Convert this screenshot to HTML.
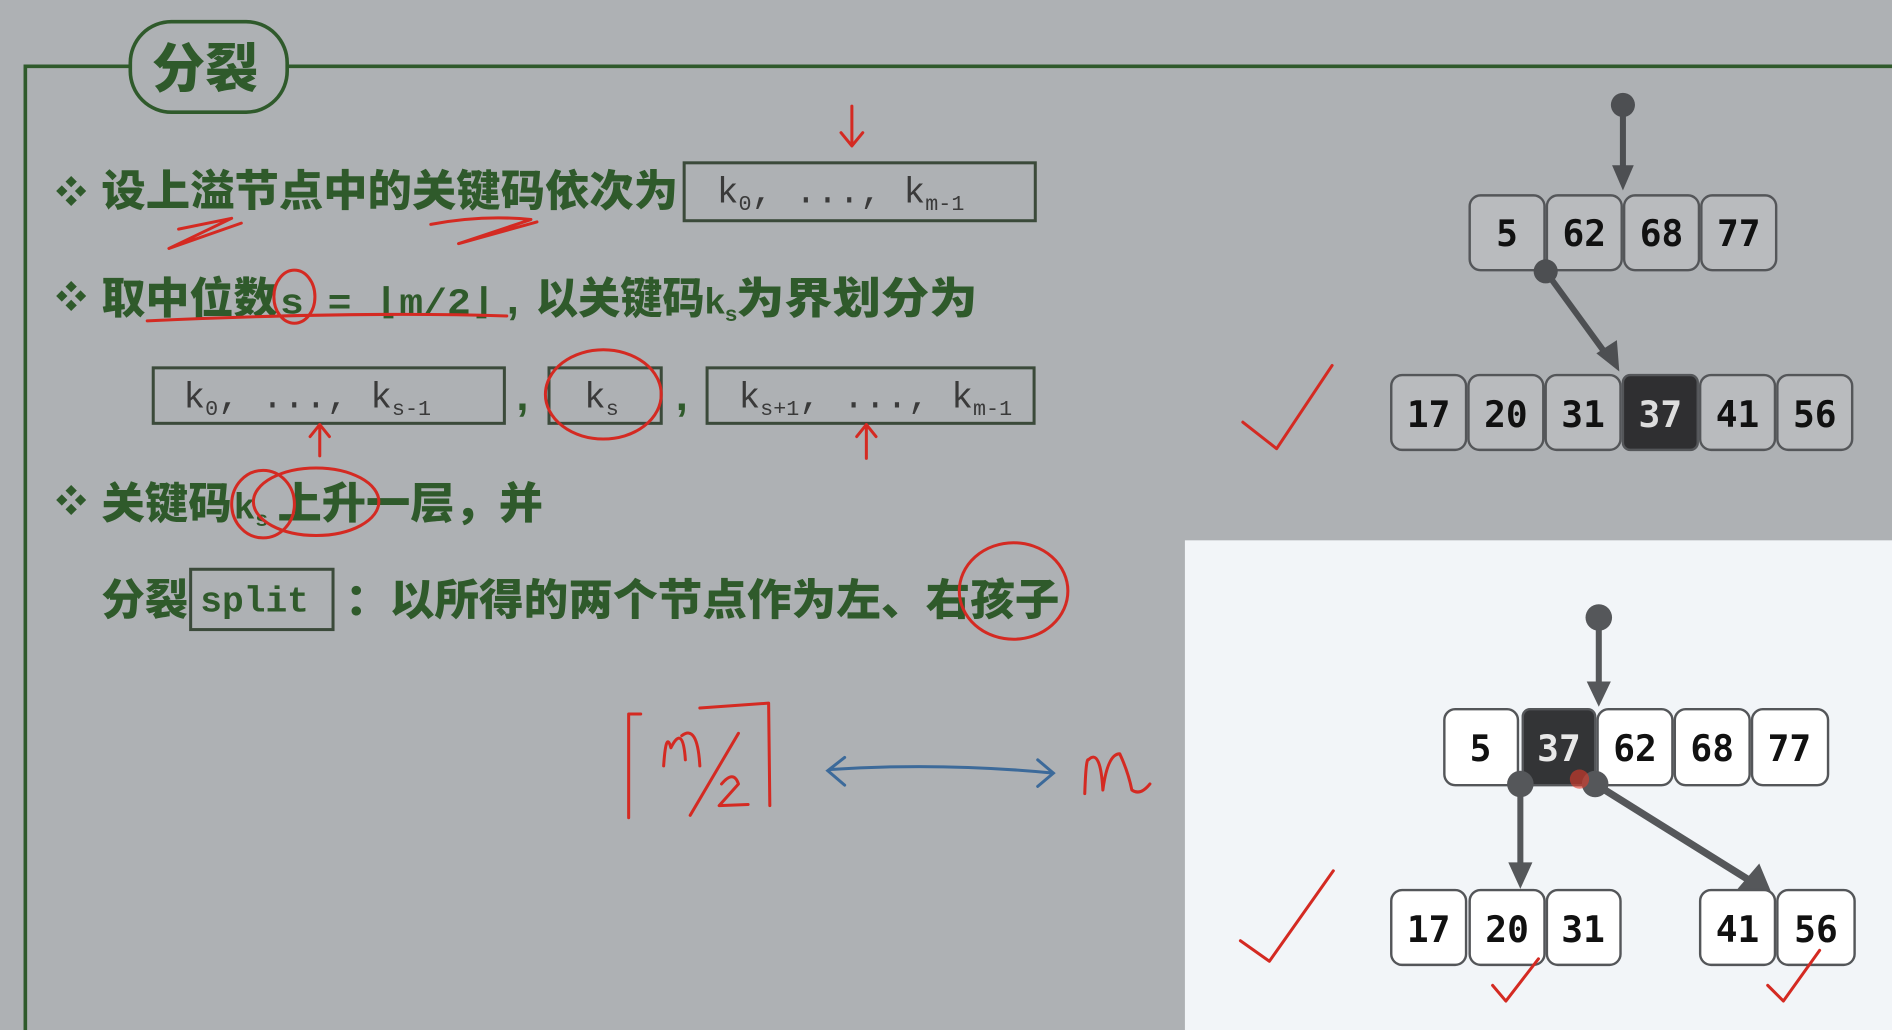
<!DOCTYPE html>
<html><head><meta charset="utf-8"><style>
html,body{margin:0;padding:0;width:1892px;height:1030px;overflow:hidden;background:#aeb1b4}
svg{display:block}
.cn{font-family:"Liberation Sans","Noto Sans CJK SC",sans-serif;font-weight:900;fill:#2f5a2b;font-size:36px}
.mo{font-family:"Liberation Mono","DejaVu Sans Mono",monospace;fill:#3a3a3a;font-size:30px}
.num{font-family:"DejaVu Sans Mono","Liberation Mono",monospace;font-weight:bold;fill:#111;font-size:30px;text-anchor:middle}
.r{fill:none;stroke:#d42a22;stroke-width:2.5;stroke-linecap:round;stroke-linejoin:round}
</style></head><body>
<svg width="1892" height="1030" viewBox="0 0 1568 854" preserveAspectRatio="none">
<rect width="1568" height="854" fill="#aeb1b4"/>
<!-- frame -->
<path d="M21 854 V55 H108 M238 55 H1568" fill="none" stroke="#2f5a2b" stroke-width="3"/>
<rect x="108" y="18" width="130" height="75" rx="34" fill="#aeb1b4" stroke="#2f5a2b" stroke-width="3"/>
<text x="126" y="72" class="cn" style="font-size:44px">分裂</text>

<!-- line1 -->
<text x="46" y="168" class="cn" style="font-size:26px">❖</text>
<text x="84" y="171" class="cn" textLength="478" lengthAdjust="spacingAndGlyphs">设上溢节点中的关键码依次为</text>
<rect x="567" y="135" width="291" height="48" fill="none" stroke="#3b4a3a" stroke-width="2.5"/>
<text x="594" y="168" class="mo">k<tspan font-size="18" dy="6">0</tspan><tspan dy="-6">,  ...,  k</tspan><tspan font-size="18" dy="6">m-1</tspan></text>

<!-- line2 -->
<text x="46" y="255" class="cn" style="font-size:26px">❖</text>
<text x="84" y="260" class="cn" textLength="146" lengthAdjust="spacingAndGlyphs">取中位数</text>
<text x="232" y="260" class="mo" style="fill:#2f5a2b;font-weight:bold" textLength="178" lengthAdjust="spacingAndGlyphs">s = ⌊m/2⌋</text>
<text x="420" y="260" class="cn">,</text>
<text x="444" y="260" class="cn" textLength="140" lengthAdjust="spacingAndGlyphs">以关键码</text>
<text x="584" y="260" class="cn" style="font-size:30px">k</text>
<text x="601" y="266" class="cn" style="font-size:18px">s</text>
<text x="610" y="260" class="cn" textLength="200" lengthAdjust="spacingAndGlyphs">为界划分为</text>

<!-- boxes row -->
<rect x="127" y="305" width="291" height="46" fill="none" stroke="#3b4a3a" stroke-width="2.5"/>
<text x="152" y="338" class="mo">k<tspan font-size="18" dy="6">0</tspan><tspan dy="-6">,  ...,  k</tspan><tspan font-size="18" dy="6">s-1</tspan></text>
<text x="428" y="340" class="cn">,</text>
<rect x="455" y="305" width="93" height="46" fill="none" stroke="#3b4a3a" stroke-width="2.5"/>
<text x="484" y="338" class="mo">k<tspan font-size="18" dy="6">s</tspan></text>
<text x="560" y="340" class="cn">,</text>
<rect x="586" y="305" width="271" height="46" fill="none" stroke="#3b4a3a" stroke-width="2.5"/>
<text x="612" y="338" class="mo">k<tspan font-size="18" dy="6">s+1</tspan><tspan dy="-6">, ...,  k</tspan><tspan font-size="18" dy="6">m-1</tspan></text>

<!-- line3 -->
<text x="46" y="424" class="cn" style="font-size:26px">❖</text>
<text x="84" y="430" class="cn" textLength="108" lengthAdjust="spacingAndGlyphs">关键码</text>
<text x="194" y="430" class="cn" style="font-size:30px">k</text>
<text x="212" y="436" class="cn" style="font-size:18px">s</text>
<text x="230" y="430" class="cn" textLength="220" lengthAdjust="spacingAndGlyphs">上升一层，并</text>

<!-- line4 -->
<text x="84" y="510" class="cn" textLength="72" lengthAdjust="spacingAndGlyphs">分裂</text>
<rect x="158" y="472" width="118" height="50" fill="none" stroke="#3b4a3a" stroke-width="2.5"/>
<text x="166" y="507" class="mo" style="fill:#2f5a2b;font-weight:bold">split</text>
<text x="286" y="510" class="cn" textLength="592" lengthAdjust="spacingAndGlyphs">：以所得的两个节点作为左、右孩子</text>

<!-- red annotations -->
<path class="r" d="M706 88 V120 M697 110 L706 121 L715 110"/>
<path class="r" d="M148 190 L192 181 L140 206 L200 185 M357 186 Q400 178 440 182 L380 202 L445 184"/>
<path class="r" d="M122 266 Q300 258 420 262"/>
<ellipse class="r" cx="244" cy="246" rx="17" ry="22"/>
<ellipse class="r" cx="500" cy="327" rx="48" ry="37"/>
<path class="r" d="M265 378 V352 M257 362 L265 352 L273 362 M718 380 V352 M710 362 L718 352 L726 362"/>
<ellipse class="r" cx="218" cy="418" rx="26" ry="28"/>
<ellipse class="r" cx="262" cy="416" rx="52" ry="28"/>
<ellipse class="r" cx="840" cy="490" rx="45" ry="40"/>
<path class="r" d="M1030 350 L1058 372 L1104 303"/>
<path class="r" d="M521 678 V592 L531 592 M572 676 L612 608 M580 587 L637 583 L638 668 M550 635 Q552 605 556 620 Q566 600 568 630 M565 610 Q578 600 580 635 M598 650 Q608 638 612 650 L596 668 L620 667"/>
<path d="M688 638 Q780 632 873 641 M700 628 L686 639 L700 651 M860 630 L873 641 L860 652" fill="none" stroke="#3c6a9a" stroke-width="2.5" stroke-linecap="round"/>
<path class="r" d="M899 658 Q900 628 902 630 Q912 620 914 655 Q918 625 928 625 Q935 640 938 655 Q945 660 953 650"/>

<!-- top-right tree -->
<g stroke="#4d4f52" fill="#4d4f52">
<circle cx="1345" cy="87" r="10" stroke="none"/>
<line x1="1345" y1="90" x2="1345" y2="140" stroke-width="5"/>
<path d="M1336 137 H1354 L1345 158 Z" stroke="none"/>
<line x1="1281" y1="225" x2="1332" y2="295" stroke-width="5"/>
<path d="M1323 293 L1340 282 L1342 308 Z" stroke="none"/>
</g>
<g fill="#b9bbbe" stroke="#545659" stroke-width="2">
<rect x="1218" y="162" width="62" height="62" rx="9"/><rect x="1282" y="162" width="62" height="62" rx="9"/>
<rect x="1346" y="162" width="62" height="62" rx="9"/><rect x="1410" y="162" width="62" height="62" rx="9"/>
<rect x="1153" y="311" width="62" height="62" rx="9"/><rect x="1217" y="311" width="62" height="62" rx="9"/>
<rect x="1281" y="311" width="62" height="62" rx="9"/><rect x="1345" y="311" width="62" height="62" rx="6" fill="#2f2f31"/>
<rect x="1409" y="311" width="62" height="62" rx="9"/><rect x="1473" y="311" width="62" height="62" rx="9"/>
</g>
<circle cx="1281" cy="225" r="10" fill="#4d4f52"/>
<g class="num">
<text x="1249" y="204">5</text><text x="1313" y="204">62</text><text x="1377" y="204">68</text><text x="1441" y="204">77</text>
<text x="1184" y="354">17</text><text x="1248" y="354">20</text><text x="1312" y="354">31</text><text x="1376" y="354" style="fill:#ddd">37</text><text x="1440" y="354">41</text><text x="1504" y="354">56</text>
</g>

<!-- white panel -->
<rect x="982" y="448" width="586" height="406" fill="#f2f5f8"/>
<g stroke="#55575a" fill="#55575a">
<circle cx="1325" cy="512" r="11" stroke="none"/>
<line x1="1325" y1="515" x2="1325" y2="568" stroke-width="5"/>
<path d="M1315 565 H1335 L1325 586 Z" stroke="none"/>
<line x1="1260" y1="652" x2="1260" y2="718" stroke-width="5"/>
<path d="M1250 715 H1270 L1260 737 Z" stroke="none"/>
<line x1="1322" y1="650" x2="1450" y2="730" stroke-width="6"/>
<path d="M1440 737 L1458 716 L1468 740 Z" stroke="none"/>
</g>
<g fill="#ffffff" stroke="#545659" stroke-width="2">
<rect x="1197" y="588" width="61" height="63" rx="9"/><rect x="1262" y="588" width="60" height="63" rx="6" fill="#333436"/>
<rect x="1324" y="588" width="62" height="63" rx="9"/><rect x="1388" y="588" width="62" height="63" rx="9"/><rect x="1452" y="588" width="63" height="63" rx="9"/>
<rect x="1153" y="738" width="62" height="62" rx="9"/><rect x="1218" y="738" width="62" height="62" rx="9"/><rect x="1282" y="738" width="61" height="62" rx="9"/>
<rect x="1409" y="738" width="62" height="62" rx="9"/><rect x="1473" y="738" width="64" height="62" rx="9"/>
</g>
<circle cx="1260" cy="650" r="11" fill="#55575a"/>
<circle cx="1322" cy="650" r="11" fill="#55575a"/>
<circle cx="1309" cy="646" r="8" fill="#e03a2a" opacity="0.6"/>
<g class="num">
<text x="1227" y="631">5</text><text x="1292" y="631" style="fill:#e8e8e8">37</text><text x="1355" y="631">62</text><text x="1419" y="631">68</text><text x="1483" y="631">77</text>
<text x="1184" y="781">17</text><text x="1249" y="781">20</text><text x="1312" y="781">31</text><text x="1440" y="781">41</text><text x="1505" y="781">56</text>
</g>
<path class="r" d="M1028 780 L1052 797 L1105 722"/>
<path class="r" d="M1237 817 L1248 830 L1275 795 M1465 817 L1478 830 L1508 788"/>
</svg>
</body></html>
